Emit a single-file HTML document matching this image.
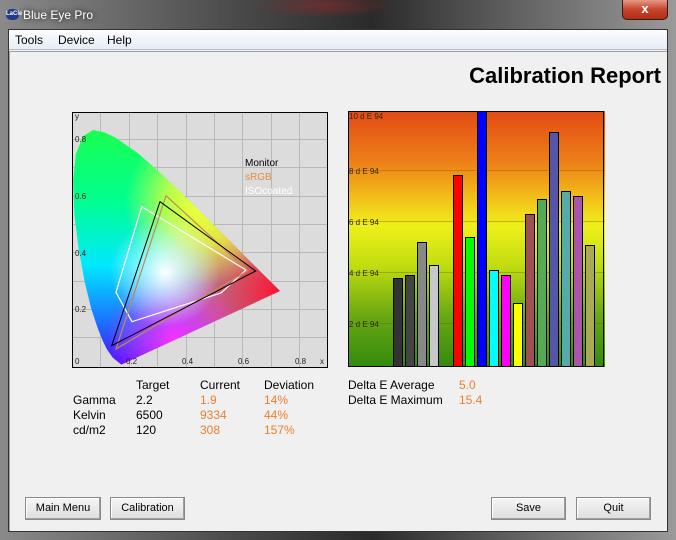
<!DOCTYPE html>
<html><head><meta charset="utf-8"><style>
*{margin:0;padding:0;box-sizing:border-box}
body{width:676px;height:540px;overflow:hidden;position:relative;font-family:"Liberation Sans",sans-serif;font-size:12px;background:#5a5a5a}
.t{position:absolute;white-space:nowrap}
.o{color:#ef7d2c}
.btn{position:absolute;height:23px;background:linear-gradient(#f6f6f6,#dedede);border:1px solid #8a8a8a;box-shadow:inset -1px -1px 0 #a0a0a0,inset 1px 1px 0 #fff;text-align:center;line-height:21px;font-size:11px}
</style></head><body>
<div style="position:absolute;left:0;top:0;width:676px;height:540px;background:linear-gradient(90deg,#8a8a8a 0%,#4a4a4a 35%,#2a2a2a 55%,#5e5e5e 75%,#9a9a9a 100%)"></div>
<div style="position:absolute;left:200px;top:0;width:250px;height:28px;background:radial-gradient(ellipse at 50% 20%,rgba(160,40,40,.5),rgba(0,0,0,0) 40%)"></div>
<div style="position:absolute;left:6px;top:9px;width:13px;height:11px;border-radius:5px;background:#223a8c;color:#fff;font-size:6px;line-height:11px;text-align:center;font-weight:bold">LaCie</div>
<div class="t" style="left:23px;top:8px;color:#fff;font-size:12px;text-shadow:0 0 6px #000">Blue Eye Pro</div>
<div style="position:absolute;left:622px;top:0;width:46px;height:20px;border:1px solid #3a1a14;border-top:none;border-radius:0 0 5px 5px;background:linear-gradient(#e59a88,#c8432b 50%,#b12d16);color:#fff;font-weight:bold;text-align:center;line-height:18px;font-size:13px">x</div>
<div style="position:absolute;left:8px;top:29px;width:660px;height:503px;background:#f0f0f0;border:1px solid #333"></div>
<div style="position:absolute;left:9px;top:30px;width:658px;height:20px;background:linear-gradient(#fdfdff,#e6ecf6);border-bottom:1px solid #b8c0cc"></div>
<div class="t" style="left:15px;top:33px">Tools</div>
<div class="t" style="left:58px;top:33px">Device</div>
<div class="t" style="left:107px;top:33px">Help</div>
<div style="position:absolute;left:9px;top:51px;width:658px;height:480px;border-top:1px solid #a0a0a0;border-left:1px solid #a0a0a0"></div>
<div class="t" style="right:15px;top:63px;font-size:22px;font-weight:bold;color:#000">Calibration Report</div>

<svg style="position:absolute;left:72px;top:112px" width="256" height="256" viewBox="72 112 256 256">
<defs>
<clipPath id="hs"><path d="M121.3,364.6 L112.8,357.6 L107.1,349.6 L103,341.4 L97.8,328.4 L91.4,309.2 L84.8,282.5 L78.7,249.2 L74.3,213.6 L73.1,180.7 L75.9,153.7 L83,136.2 L93,130 L104.3,132.2 L115.8,137.9 L137,152.5 L157.4,170.1 L177.6,189.3 L197.7,209 L217,228.3 L234.8,245.9 L249.4,260.6 L267.7,278.8 L280,291 Z"/></clipPath>
<linearGradient id="g1" x1="0" y1="0" x2="0" y2="1"><stop offset="0" stop-color="#20ff40"/><stop offset=".35" stop-color="#00ff90"/><stop offset=".6" stop-color="#00e8ff"/><stop offset=".85" stop-color="#2060ff"/><stop offset="1" stop-color="#5000ff"/></linearGradient>
<radialGradient id="rr" cx="280" cy="290" r="120" gradientUnits="userSpaceOnUse"><stop offset="0" stop-color="#ff1030"/><stop offset=".6" stop-color="#ff5050" stop-opacity=".7"/><stop offset="1" stop-color="#ff6060" stop-opacity="0"/></radialGradient>
<radialGradient id="ry" cx="205" cy="205" r="80" gradientUnits="userSpaceOnUse"><stop offset="0" stop-color="#ffff30"/><stop offset=".5" stop-color="#ffff30" stop-opacity=".7"/><stop offset="1" stop-color="#ffff40" stop-opacity="0"/></radialGradient>
<radialGradient id="rm" cx="175" cy="340" r="70" gradientUnits="userSpaceOnUse"><stop offset="0" stop-color="#ff30ff"/><stop offset="1" stop-color="#ff30ff" stop-opacity="0"/></radialGradient>
<radialGradient id="rw" cx="165" cy="272" r="55" gradientUnits="userSpaceOnUse"><stop offset="0" stop-color="#fff"/><stop offset="1" stop-color="#fff" stop-opacity="0"/></radialGradient>
</defs>
<rect x="72" y="112" width="256" height="256" fill="#dcdcdc"/>
<g stroke="#b8b8b8" stroke-width="1">
<path d="M100.5,112V368M129.5,112V368M157.5,112V368M186.5,112V368M214.5,112V368M242.5,112V368M271.5,112V368M299.5,112V368"/>
<path d="M72,139.5H328M72,167.5H328M72,196.5H328M72,224.5H328M72,252.5H328M72,281.5H328M72,309.5H328M72,337.5H328"/>
</g>
<g clip-path="url(#hs)">
<rect x="72" y="112" width="256" height="256" fill="url(#g1)"/>
<rect x="72" y="112" width="256" height="256" fill="url(#rr)"/>
<rect x="72" y="112" width="256" height="256" fill="url(#ry)"/>
<rect x="72" y="112" width="256" height="256" fill="url(#rm)"/>
<rect x="72" y="112" width="256" height="256" fill="url(#rw)"/>
</g>
<polygon points="141.7,206.7 116,292.3 132,321.7 221,293 246,270" fill="none" stroke="#fff" stroke-width="1.2"/>
<polygon points="166,195.7 248,270.7 116,349" fill="none" stroke="#c88850" stroke-width="1.2"/>
<polygon points="160,201.7 255.7,271 111.7,345.7" fill="none" stroke="#000" stroke-width="1"/>
<g font-family="Liberation Sans,sans-serif" font-size="8" fill="#222">
<text x="75" y="119">y</text><text x="75" y="142">0.8</text><text x="75" y="199">0.6</text><text x="75" y="256">0.4</text><text x="75" y="312">0.2</text><text x="75" y="364">0</text>
<text x="126" y="364">0.2</text><text x="182" y="364">0.4</text><text x="238" y="364">0.6</text><text x="295" y="364">0.8</text><text x="320" y="364">x</text>
</g>
<g font-family="Liberation Sans,sans-serif" font-size="10">
<text x="245" y="166" fill="#000">Monitor</text><text x="245" y="180" fill="#e08c40">sRGB</text><text x="245" y="194" fill="#fff">ISOcoated</text>
</g>
<rect x="72.5" y="112.5" width="255" height="255" fill="none" stroke="#000"/>
</svg>

<svg style="position:absolute;left:348px;top:111px" width="257" height="256" viewBox="348 111 257 256">
<defs><linearGradient id="bg" x1="0" y1="0" x2="0" y2="1">
<stop offset="0" stop-color="#e24a16"/><stop offset=".2" stop-color="#ee8018"/><stop offset=".35" stop-color="#f2c41a"/><stop offset=".45" stop-color="#eef01a"/><stop offset=".6" stop-color="#c2de10"/><stop offset=".8" stop-color="#6aa812"/><stop offset="1" stop-color="#338a0e"/></linearGradient></defs>
<rect x="348" y="111" width="257" height="256" fill="url(#bg)"/>
<g stroke="rgba(120,80,0,.35)"><path d="M348,170.5H605M348,221.5H605M348,272.5H605M348,323.5H605"/></g>
<g font-family="Liberation Sans,sans-serif" font-size="8" fill="#2a2a10">
<text x="349" y="119">10 d E 94</text><text x="349" y="174">8 d E 94</text><text x="349" y="225">6 d E 94</text><text x="349" y="276">4 d E 94</text><text x="349" y="327">2 d E 94</text></g>
<g stroke="#000" stroke-width="1">
<rect x="393.5" y="278.5" width="9" height="88" fill="#333"/>
<rect x="405.5" y="275.5" width="9" height="91" fill="#444"/>
<rect x="417.5" y="242.5" width="9" height="124" fill="#888"/>
<rect x="429.5" y="265.5" width="9" height="101" fill="#c8c8c8"/>
<rect x="453.5" y="175.5" width="9" height="191" fill="#f00"/>
<rect x="465.5" y="237.5" width="9" height="129" fill="#0f0"/>
<rect x="477.5" y="110.5" width="9" height="256" fill="#00f"/>
<rect x="489.5" y="270.5" width="9" height="96" fill="#0ff"/>
<rect x="501.5" y="275.5" width="9" height="91" fill="#f0f"/>
<rect x="513.5" y="303.5" width="9" height="63" fill="#ff0"/>
<rect x="525.5" y="214.5" width="9" height="152" fill="#a05050"/>
<rect x="537.5" y="199.5" width="9" height="167" fill="#55aa55"/>
<rect x="549.5" y="132.5" width="9" height="234" fill="#5555aa"/>
<rect x="561.5" y="191.5" width="9" height="175" fill="#55aaaa"/>
<rect x="573.5" y="196.5" width="9" height="170" fill="#aa55aa"/>
<rect x="585.5" y="245.5" width="9" height="121" fill="#aaaa55"/>
</g>
<rect x="348.5" y="111.5" width="255" height="255" fill="none" stroke="#000"/>
</svg>

<div class="t" style="left:136px;top:378px">Target</div>
<div class="t" style="left:200px;top:378px">Current</div>
<div class="t" style="left:264px;top:378px">Deviation</div>
<div class="t" style="left:73px;top:393px">Gamma</div><div class="t" style="left:136px;top:393px">2.2</div><div class="t o" style="left:200px;top:393px">1.9</div><div class="t o" style="left:264px;top:393px">14%</div>
<div class="t" style="left:73px;top:408px">Kelvin</div><div class="t" style="left:136px;top:408px">6500</div><div class="t o" style="left:200px;top:408px">9334</div><div class="t o" style="left:264px;top:408px">44%</div>
<div class="t" style="left:73px;top:423px">cd/m2</div><div class="t" style="left:136px;top:423px">120</div><div class="t o" style="left:200px;top:423px">308</div><div class="t o" style="left:264px;top:423px">157%</div>
<div class="t" style="left:348px;top:378px">Delta E Average</div><div class="t o" style="left:459px;top:378px">5.0</div>
<div class="t" style="left:348px;top:393px">Delta E Maximum</div><div class="t o" style="left:459px;top:393px">15.4</div>

<div class="btn" style="left:25px;top:497px;width:76px">Main Menu</div>
<div class="btn" style="left:110px;top:497px;width:75px">Calibration</div>
<div class="btn" style="left:491px;top:497px;width:75px">Save</div>
<div class="btn" style="left:576px;top:497px;width:75px">Quit</div>
</body></html>
